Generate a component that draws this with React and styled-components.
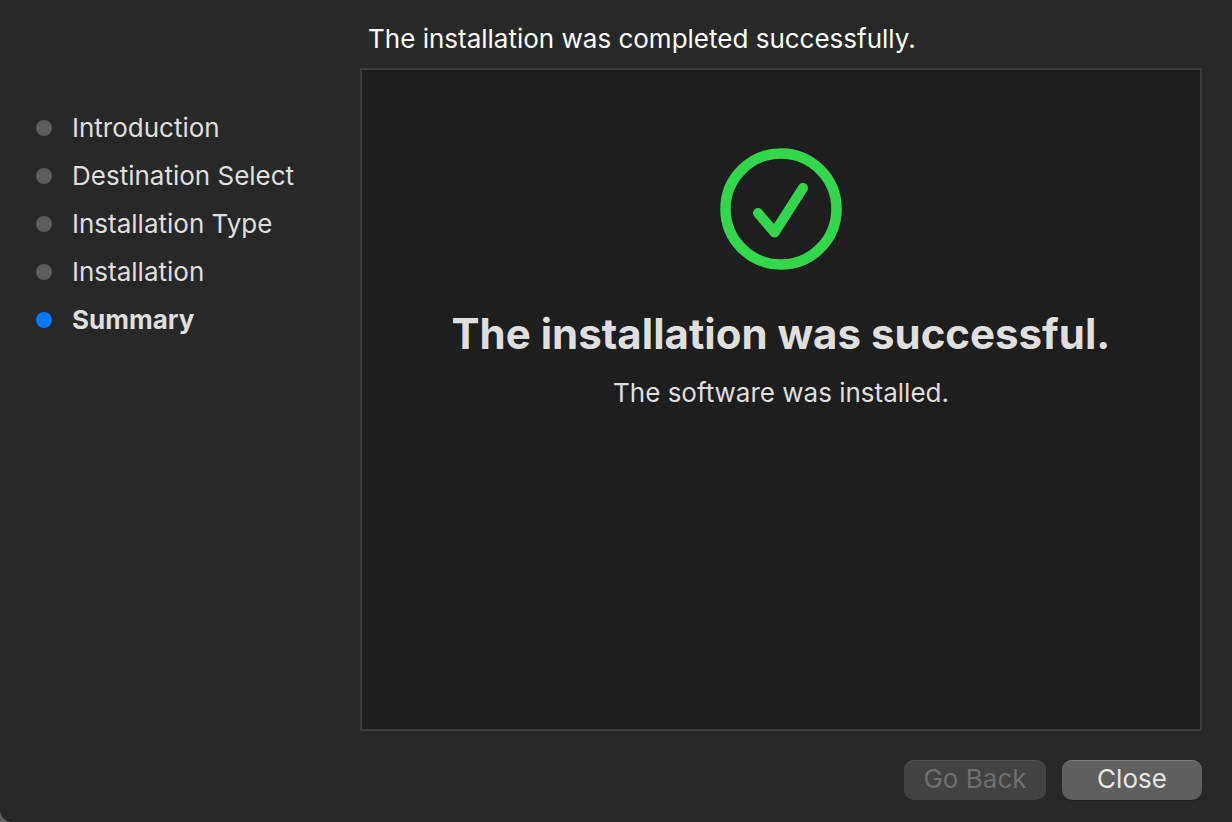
import styled, { createGlobalStyle } from "styled-components";

const GlobalStyle = createGlobalStyle`
  * {
    box-sizing: border-box;
  }

  body {
    margin: 0;
    background: #606060;
    font-family: Inter, "Liberation Sans", sans-serif;
  }
`;

const Window = styled.main`
  min-height: 100vh;
  display: grid;
  grid-template-columns: 360px 1fr;
  grid-template-rows: auto 1fr auto;
  padding: 20px 30px 22px 0;
  background: #282828;
  border-bottom-left-radius: 12px;
  color: #dfdfdf;
`;

const Title = styled.h1`
  grid-column: 2;
  margin: 0;
  padding: 0 8px 10px;
  font-size: 26px;
  line-height: 38px;
  font-weight: 400;
  color: #ffffff;
`;

const Steps = styled.ol`
  grid-column: 1;
  margin: 0;
  padding: 36px 0 0 36px;
  list-style: none;
`;

const Step = styled.li`
  display: flex;
  align-items: center;
  gap: 20px;
  font-size: 26px;
  line-height: 48px;
  font-weight: ${({ $active }) => ($active ? 700 : 400)};

  &::before {
    content: "";
    width: 16px;
    height: 16px;
    border-radius: 50%;
    background: ${({ $active }) => ($active ? "#007aff" : "#5d5d5d")};
  }
`;

const Panel = styled.section`
  grid-column: 2;
  display: flex;
  flex-direction: column;
  align-items: center;
  padding-top: 78px;
  background: #1e1e1e;
  border: 2px solid #3c3c3c;
  text-align: center;
`;

const Heading = styled.h2`
  margin: 36px 0 0;
  font-size: 42px;
  line-height: 56px;
  font-weight: 700;
`;

const Message = styled.p`
  margin: 12px 0 0;
  font-size: 26px;
  line-height: 38px;
`;

const Footer = styled.footer`
  grid-column: 2;
  display: flex;
  justify-content: flex-end;
  gap: 16px;
  padding-top: 29px;
`;

const Button = styled.button`
  width: ${({ $wide }) => ($wide ? 142 : 140)}px;
  height: 40px;
  padding: 0 0 2px;
  border: 0;
  border-radius: 10px;
  background: #5f5f5f;
  box-shadow: inset 0 1px #7c7c7c, 0 1px 1px #1f1f1f;
  color: #e5e5e5;
  font-family: inherit;
  font-size: 26px;
  line-height: 38px;

  &:disabled {
    background: #424242;
    box-shadow: inset 0 1px #4f4f4f;
    color: #6f6f6f;
  }
`;

const steps = [
  "Introduction",
  "Destination Select",
  "Installation Type",
  "Installation",
  "Summary",
];

const SuccessIcon = () => (
  <svg width="122" height="122" viewBox="0 0 122 122" fill="none" aria-hidden="true">
    <circle cx="61" cy="61" r="55.5" stroke="#32d74b" strokeWidth="10.5" />
    <path
      d="M38 65L54.5 84.5L83 40"
      stroke="#32d74b"
      strokeWidth="10"
      strokeLinecap="round"
      strokeLinejoin="round"
    />
  </svg>
);

export default function App() {
  const current = "Summary";

  return (
    <>
      <GlobalStyle />
      <Window>
        <Title>The installation was completed successfully.</Title>
        <Steps>
          {steps.map((step) => (
            <Step key={step} $active={step === current}>
              {step}
            </Step>
          ))}
        </Steps>
        <Panel>
          <SuccessIcon />
          <Heading>The installation was successful.</Heading>
          <Message>The software was installed.</Message>
        </Panel>
        <Footer>
          <Button type="button" $wide disabled>
            Go Back
          </Button>
          <Button type="button">Close</Button>
        </Footer>
      </Window>
    </>
  );
}
